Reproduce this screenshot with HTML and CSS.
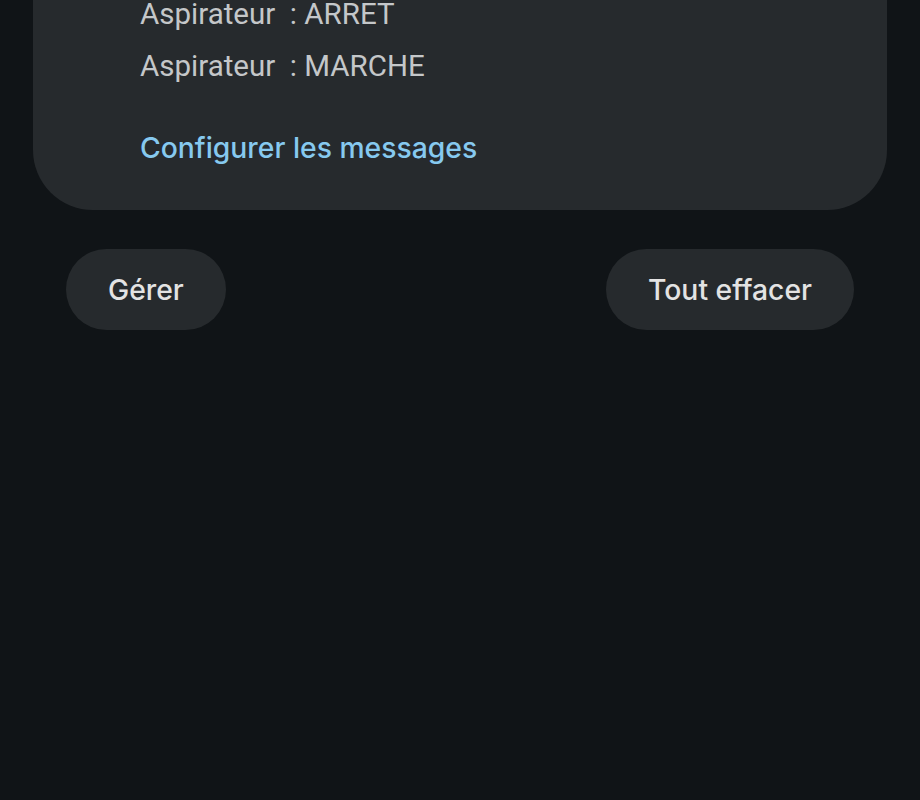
FILE: index.html
```html
<!DOCTYPE html>
<html lang="fr">
<head>
  <meta charset="utf-8" />
  <meta name="viewport" content="width=device-width, initial-scale=1" />
  <title>Notifications</title>
  <link rel="stylesheet" href="styles.css">
</head>
<body>
  <div class="card">
    <ul class="messages">
      <li>Aspirateur &nbsp;: ARRET</li>
      <li>Aspirateur &nbsp;: MARCHE</li>
    </ul>
    <a href="#" class="link">Configurer les messages</a>
  </div>

  <div class="actions">
    <button class="pill">Gérer</button>
    <button class="pill">Tout effacer</button>
  </div>
</body>
</html>
```

FILE: styles.css
```css
body {
  margin: 0;
  background: #101417;
  font-family: Roboto, "Liberation Sans", sans-serif;
  color: #c4c7c9;
}
.card {
  background: #262a2d;
  margin: 0 33px;
  padding: 0 0 42px 107px;
  border-radius: 0 0 60px 60px;
}
.messages {
  list-style: none;
  margin: -12px 0 0;
  padding: 0;
  font-size: 29.5px;
  line-height: 52px;
}
.link {
  display: block;
  margin-top: 36px;
  color: #86c9ef;
  text-decoration: none;
  font-family: Inter, "Open Sans", sans-serif;
  font-weight: 500;
  font-size: 28.3px;
  line-height: 40px;
}
.actions {
  display: flex;
  justify-content: space-between;
  padding: 0 66px;
  margin-top: 39px;
}
.pill {
  height: 81px;
  padding: 0 42px;
  border: none;
  border-radius: 41px;
  background: #262a2d;
  color: #e3e3e3;
  font-family: Inter, "Open Sans", sans-serif;
  font-weight: 500;
  font-size: 28.3px;
  cursor: pointer;
}
```
